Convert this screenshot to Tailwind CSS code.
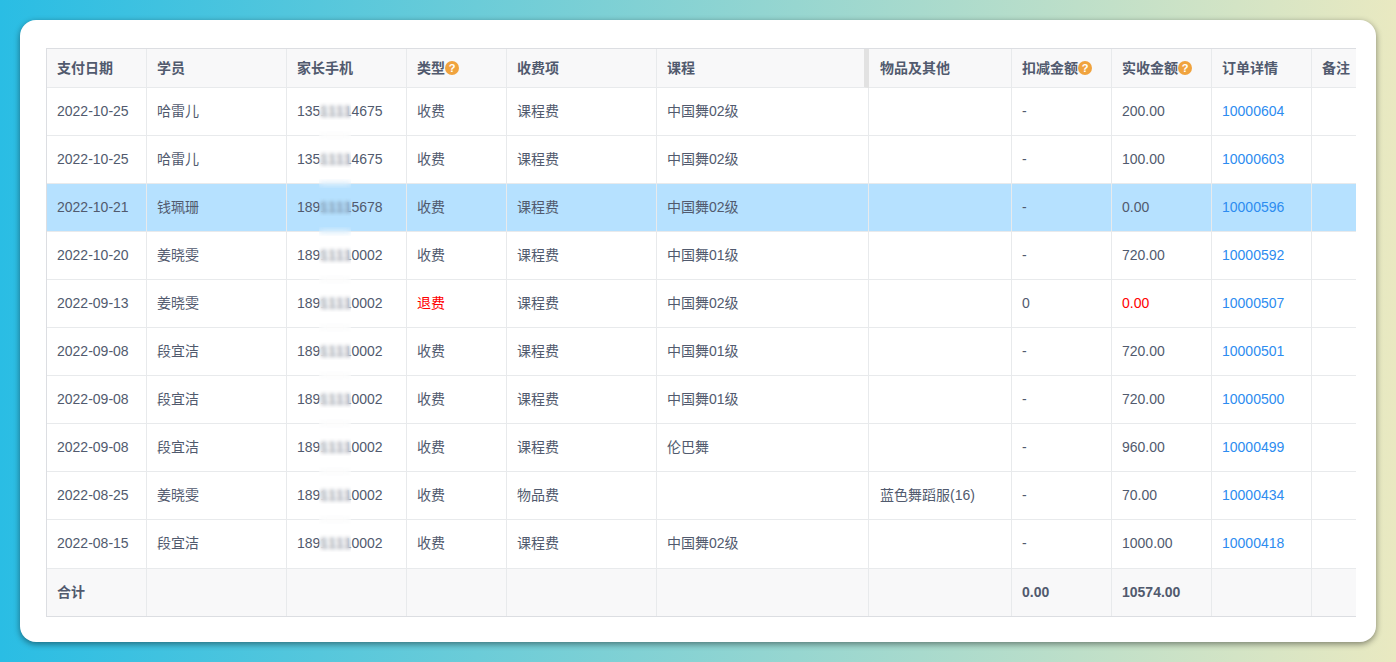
<!doctype html>
<html>
<head>
  <meta charset="UTF-8">
  <meta name="viewport" content="width=device-width, initial-scale=1.0">
  <script src="https://cdn.jsdelivr.net/npm/@tailwindcss/browser@4"></script>
</head>
<body class="h-screen overflow-hidden p-5 bg-[linear-gradient(90deg,#2abde4,#e9e9c1)] font-['Liberation_Sans','Noto_Sans_CJK_SC',sans-serif] text-sm text-[#515a6e]">
<div class="h-[622px] rounded-2xl bg-white pt-7 pl-[26px] pr-5 shadow-[0_2px_6px_rgba(0,0,0,0.45)]">
  <div class="overflow-hidden border-t border-b border-l border-[#dcdee2]">
    <table class="table-fixed w-[1365px] border-separate border-spacing-0">
      <colgroup>
        <col class="w-[100px]"><col class="w-[140px]"><col class="w-[120px]"><col class="w-[100px]"><col class="w-[150px]"><col class="w-[212px]"><col class="w-[143px]"><col class="w-[100px]"><col class="w-[100px]"><col class="w-[100px]"><col class="w-[100px]">
      </colgroup>
      <thead>
        <tr class="h-[39px] bg-[#f8f8f9] font-bold">
          <th class="border-r border-b border-[#e8eaec] pl-2.5 text-left">支付日期</th>
          <th class="border-r border-b border-[#e8eaec] pl-2.5 text-left">学员</th>
          <th class="border-r border-b border-[#e8eaec] pl-2.5 text-left">家长手机</th>
          <th class="border-r border-b border-[#e8eaec] pl-2.5 text-left"><div class="flex items-center">类型<span class="flex size-3.5 items-center justify-center rounded-full bg-[#f0a33e] text-[11px] leading-none text-white">?</span></div></th>
          <th class="border-r border-b border-[#e8eaec] pl-2.5 text-left">收费项</th>
          <th class="border-r-[5px] border-r-[#e2e2e2] border-b border-b-[#e8eaec] pl-2.5 text-left">课程</th>
          <th class="border-r border-b border-[#e8eaec] pl-[11px] text-left">物品及其他</th>
          <th class="border-r border-b border-[#e8eaec] pl-2.5 text-left"><div class="flex items-center">扣减金额<span class="flex size-3.5 items-center justify-center rounded-full bg-[#f0a33e] text-[11px] leading-none text-white">?</span></div></th>
          <th class="border-r border-b border-[#e8eaec] pl-2.5 text-left"><div class="flex items-center">实收金额<span class="flex size-3.5 items-center justify-center rounded-full bg-[#f0a33e] text-[11px] leading-none text-white">?</span></div></th>
          <th class="border-r border-b border-[#e8eaec] pl-2.5 text-left">订单详情</th>
          <th class="border-r border-b border-[#e8eaec] pl-2.5 text-left">备注</th>
        </tr>
      </thead>
      <tbody id="rows"></tbody>
      <tfoot>
        <tr class="h-[47px] bg-[#f8f8f9] font-bold">
          <td class="border-r border-[#e8eaec] pl-2.5 pb-0.5">合计</td>
          <td class="border-r border-[#e8eaec]"></td>
          <td class="border-r border-[#e8eaec]"></td>
          <td class="border-r border-[#e8eaec]"></td>
          <td class="border-r border-[#e8eaec]"></td>
          <td class="border-r border-[#e8eaec]"></td>
          <td class="border-r border-[#e8eaec]"></td>
          <td class="border-r border-[#e8eaec] pl-2.5 pb-0.5">0.00</td>
          <td class="border-r border-[#e8eaec] pl-2.5 pb-0.5">10574.00</td>
          <td class="border-r border-[#e8eaec]"></td>
          <td class="border-r border-[#e8eaec]"></td>
        </tr>
      </tfoot>
    </table>
  </div>
</div>

<script>
  const data = [
    ['2022-10-25', '哈雷儿', '135', '4675', '收费', '课程费', '中国舞02级', '', '-', '200.00', '10000604'],
    ['2022-10-25', '哈雷儿', '135', '4675', '收费', '课程费', '中国舞02级', '', '-', '100.00', '10000603'],
    ['2022-10-21', '钱珮珊', '189', '5678', '收费', '课程费', '中国舞02级', '', '-', '0.00', '10000596'],
    ['2022-10-20', '姜晓雯', '189', '0002', '收费', '课程费', '中国舞01级', '', '-', '720.00', '10000592'],
    ['2022-09-13', '姜晓雯', '189', '0002', '退费', '课程费', '中国舞02级', '', '0', '0.00', '10000507'],
    ['2022-09-08', '段宜洁', '189', '0002', '收费', '课程费', '中国舞01级', '', '-', '720.00', '10000501'],
    ['2022-09-08', '段宜洁', '189', '0002', '收费', '课程费', '中国舞01级', '', '-', '720.00', '10000500'],
    ['2022-09-08', '段宜洁', '189', '0002', '收费', '课程费', '伦巴舞', '', '-', '960.00', '10000499'],
    ['2022-08-25', '姜晓雯', '189', '0002', '收费', '物品费', '', '蓝色舞蹈服(16)', '-', '70.00', '10000434'],
    ['2022-08-15', '段宜洁', '189', '0002', '收费', '课程费', '中国舞02级', '', '-', '1000.00', '10000418']
  ];

  const cell = 'border-r border-b border-[#e8eaec] pl-2.5 pb-0.5';

  document.getElementById('rows').innerHTML = data.map((r, i) => {
    const refund = r[4] === '退费';
    const last = i === data.length - 1;
    return `
      <tr class="${i === 2 ? 'bg-[#b6e1ff]' : 'bg-white'} ${last ? 'h-[49px]' : 'h-12'}">
        <td class="${cell}">${r[0]}</td>
        <td class="${cell}">${r[1]}</td>
        <td class="${cell} relative [font-kerning:none]">
          ${r[2]}1111${r[3]}
          <span class="absolute left-8 top-3.5 z-10 h-[18px] w-8 backdrop-blur-[2px]"></span>
          ${last ? '' : '<span class="absolute left-8 top-[43px] z-10 h-[9px] w-8 backdrop-blur-[3px]"></span>'}
        </td>
        <td class="${cell} ${refund ? 'text-[#ff0000]' : ''}">${r[4]}</td>
        <td class="${cell}">${r[5]}</td>
        <td class="${cell}">${r[6]}</td>
        <td class="${cell} pl-[11px]">${r[7]}</td>
        <td class="${cell}">${r[8]}</td>
        <td class="${cell} ${refund ? 'text-[#ff0000]' : ''}">${r[9]}</td>
        <td class="${cell} text-[#2d8cf0]">${r[10]}</td>
        <td class="${cell}"></td>
      </tr>`;
  }).join('');
</script>
</body>
</html>
